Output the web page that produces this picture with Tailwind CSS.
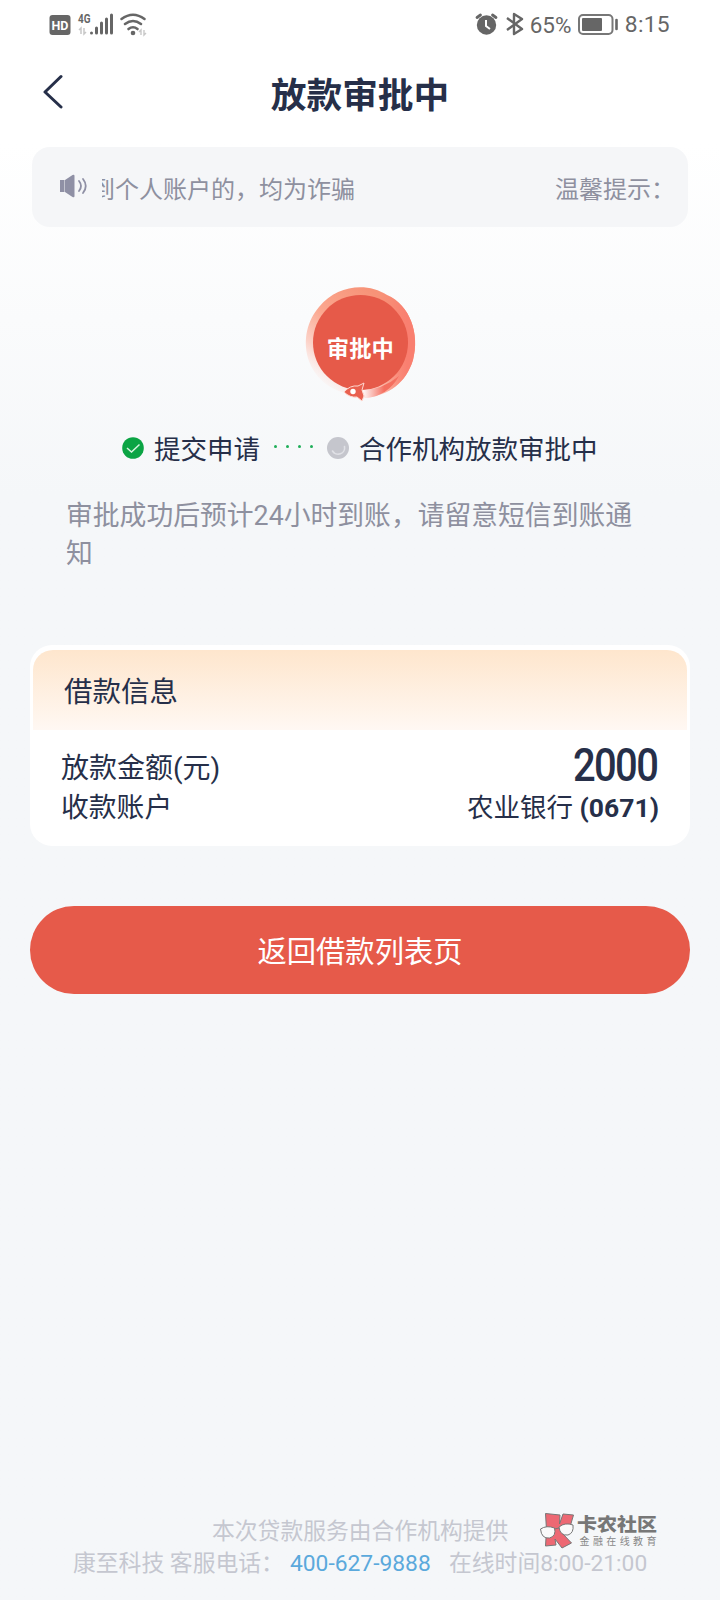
<!DOCTYPE html>
<html lang="zh-CN">
<head>
<meta charset="utf-8">
<title>放款审批中</title>
<script src="https://cdn.jsdelivr.net/npm/@tailwindcss/browser@4"></script>
</head>
<body class="bg-[#f5f7f9]">
<div class="relative flex h-[1600px] w-[720px] flex-col overflow-hidden bg-linear-to-b from-white from-[9%] via-[#f5f7f9] via-[31%] to-[#f5f7f9] font-['Roboto','Noto_Sans_CJK_SC',sans-serif] text-[#262f49]">

  <!-- Status bar -->
  <div class="flex h-12 shrink-0 items-center justify-between pl-[49px] pr-[50px] text-[#666]">
    <svg class="h-12 w-[100px]" viewBox="49 0 100 48" fill="none">
      <rect x="49.500" y="15" width="21" height="20" rx="3" fill="#666"/>
      <text x="51.500" y="30" font-family="Roboto" font-size="13" font-weight="700" fill="#fff" textLength="17" lengthAdjust="spacingAndGlyphs">HD</text>
      <text x="78" y="23" font-family="Roboto" font-size="13" font-weight="700" fill="#666" textLength="12.500" lengthAdjust="spacingAndGlyphs">4G</text>
      <path d="M81 34v-6l-2 2M84 28v6l2-2" stroke="#c8c8c8" stroke-width="1.500"/>
      <path d="M91.500 33v0M96.500 33v-5M101.500 33v-10M106.500 33v-14M111.500 33V15" stroke="#666" stroke-width="3" stroke-linecap="round"/>
      <path d="M121.500 19q11.500-8.500 23 0M125 24q8-6 16 0M128.500 29q4.500-3.500 9 0" stroke="#666" stroke-width="2.600" stroke-linecap="round"/>
      <circle cx="133" cy="33" r="2.300" fill="#666"/>
      <path d="M141 35v-5l-2 2M144 30v5l2-2" stroke="#c8c8c8" stroke-width="1.400"/>
    </svg>
    <div class="flex items-center">
      <svg class="h-12 w-[52px]" viewBox="474 0 52 48" fill="none">
        <circle cx="486.500" cy="25" r="9.700" fill="#666"/>
        <path d="M477 17.500l3.500-2.500M496 17.500l-3.500-2.500" stroke="#666" stroke-width="2.800" stroke-linecap="round"/>
        <path d="M486 20v6l4 3" stroke="#fff" stroke-width="2"/>
        <path d="M507 18l15 11-8 5V14l8 5-15 11" stroke="#666" stroke-width="2.400" stroke-linejoin="round"/>
      </svg>
      <span class="ml-1 w-[44px] pt-[2px] text-[22.5px] leading-none whitespace-nowrap tracking-[-0.1px]">65%</span>
      <svg class="ml-[2px] h-12 w-[42px]" viewBox="576 0 42 48" fill="none">
        <rect x="579" y="15" width="33.500" height="19" rx="4" stroke="#777" stroke-width="2"/>
        <rect x="582" y="18" width="20" height="13" rx="1" fill="#666"/>
        <path d="M616.500 20v9" stroke="#666" stroke-width="2.600" stroke-linecap="round"/>
      </svg>
      <span class="ml-[7px] pt-[2px] text-[22.8px] leading-none tracking-[0.3px]">8:15</span>
    </div>
  </div>

  <!-- Title bar -->
  <header class="flex h-[99px] shrink-0 items-start pl-10">
    <svg class="mt-[25px] h-9 w-6" viewBox="0 0 24 36" fill="none" stroke="#262f49" stroke-width="3" stroke-linecap="round" stroke-linejoin="round"><path d="M21 3.500 5 19 21 34"/></svg>
    <h1 class="flex h-[97px] flex-1 items-center justify-center pr-16 text-[35.700px] leading-none font-bold">放款审批中</h1>
  </header>

  <!-- Scrolling notice -->
  <div class="mx-8 flex h-[80px] shrink-0 items-center rounded-[18px] bg-[#f5f6f8] pl-[27px] text-[24px] text-[#8e909f]">
    <svg class="-mt-1 h-7 w-8" viewBox="0 0 32 28" fill="none"><path d="M1 9h4.500v12H1zM6 9l7.500-5q2-1 2 1v20q0 2-2 1l-7.500-5z" fill="#8f90a5"/><path d="M20 10q4 5 0 10M24 8q5.500 7 0 14" stroke="#8f90a5" stroke-width="1.800" stroke-linecap="round"/></svg>
    <div class="mt-[5px] ml-[11px] flex w-[574px] overflow-hidden leading-8 whitespace-nowrap">
      <span class="-ml-[11px]">到个人账户的，均为诈骗</span>
      <span class="ml-[200px]">温馨提示：</span>
    </div>
  </div>

  <!-- Progress badge -->
  <div class="mt-[53px] flex h-[132px] shrink-0 justify-center">
    <svg class="h-[130px] w-[130px]" viewBox="295 280 130 130">
      <defs>
        <linearGradient id="ring" x1="0.150" y1="0.900" x2="0.750" y2="0.150"><stop offset="0" stop-color="#fde3dd" stop-opacity="0"/><stop offset=".25" stop-color="#fcd2c8"/><stop offset=".55" stop-color="#fba78f"/><stop offset="1" stop-color="#f79378"/></linearGradient>
        <linearGradient id="side" x1="0" y1="0" x2="1" y2="0"><stop offset="0.350" stop-color="#f97f70" stop-opacity="0"/><stop offset="0.850" stop-color="#f97f70"/></linearGradient>
        <linearGradient id="tail" x1="0" y1="0" x2="1" y2="0"><stop offset="0" stop-color="#fff"/><stop offset="0.600" stop-color="#f46f60"/></linearGradient>
      </defs>
      <path d="M345 393C304 382 295 335 319 307C337 285 367 282 387 295C410 305 420 334 413 360C406 383 389 395 366 398Z" fill="url(#ring)"/>
      <path d="M360 287C370 286 380 290 387 295C410 305 420 334 413 360C406 383 389 395 366 398L360 390Z" fill="url(#side)"/>
      <circle cx="360.500" cy="342.500" r="47.500" fill="#e65a49"/>
      <path d="M362 390Q382 390 399 376Q388 396 366 398Z" fill="url(#tail)"/>
      <path d="M344 392Q350 385 358 386L364 383 362 390 364 396 362 401 357 397Q350 398 344 392Z" fill="#e9604f" stroke="#ffd8d0" stroke-width="1"/>
      <circle cx="353" cy="391.500" r="2.700" fill="#fff"/>
      <text x="360.300" y="356.500" text-anchor="middle" font-family="Noto Sans CJK SC" font-size="22.300" font-weight="700" fill="#fff">审批中</text>
    </svg>
  </div>

  <!-- Steps -->
  <div class="flex h-[72px] shrink-0 items-center pl-[122px] text-[26.500px] leading-none whitespace-nowrap">
    <svg class="h-[22px] w-[22px]" viewBox="0 0 22 22" fill="none"><circle cx="11" cy="11" r="10.800" fill="#0ba444"/><path d="M5 11l4.500 4 8-7.500" stroke="#d8f4df" stroke-width="1.500"/></svg>
    <span class="ml-[10px] w-[106px] pt-1">提交申请</span>
    <div class="mb-[3px] ml-[14px] flex w-[39px] justify-between"><i class="size-[3px] rounded-full bg-[#1fae59]"></i><i class="size-[3px] rounded-full bg-[#1fae59]"></i><i class="size-[3px] rounded-full bg-[#1fae59]"></i><i class="size-[3px] rounded-full bg-[#1fae59]"></i></div>
    <svg class="ml-[14px] h-[22px] w-[22px]" viewBox="0 0 22 22" fill="none"><circle cx="11" cy="11" r="11" fill="#c5c6cd"/><path d="M17.500 9.500a6.500 6.500 0 0 1-12 4.500" stroke="#e0e1e6" stroke-width="1.600" stroke-linecap="round"/></svg>
    <span class="ml-[10px] pt-1">合作机构放款审批中</span>
  </div>
  <p class="ml-[66px] h-[150px] w-[590px] shrink-0 pt-[13px] text-[26.800px] leading-[38px] text-[#8e909f]">审批成功后预计24小时到账，请留意短信到账通<br>知</p>

  <!-- Loan details -->
  <section class="mx-[30px] mt-[11px] h-[201px] shrink-0 rounded-[22px] bg-white p-[3px] pt-[5px]">
    <h2 class="flex h-20 items-center rounded-t-[20px] bg-linear-to-b from-[#fee6cd] to-[#fff8f3] pt-[6px] pl-[31px] text-[28.500px] leading-none">借款信息</h2>
    <div class="flex h-[58px] items-center justify-between pt-[14px] pr-[28px] pl-[28px]">
      <span class="pt-[5px] text-[28px] leading-none">放款金额(元)</span>
      <span class="-mt-1 mr-[2px] origin-right scale-x-[0.85] text-[47px] leading-none font-medium tracking-[-1.9px]">2000</span>
    </div>
    <div class="flex h-9 items-center justify-between pt-1 pr-[28px] pl-[28px] leading-none">
      <span class="text-[27.800px]">收款账户</span>
      <span class="text-[26.500px]">农业银行 <b>(0671)</b></span>
    </div>
  </section>

  <button class="mx-[30px] mt-[60px] flex h-[88px] shrink-0 items-center justify-center rounded-full bg-[#e65a4a] pt-[5px] text-[29.300px] leading-none text-white">返回借款列表页</button>

  <!-- Footer -->
  <footer class="mt-auto h-[84px] text-[22.800px] leading-8 whitespace-nowrap text-[#c5c7d0]">
    <p class="pl-[212px]">本次贷款服务由合作机构提供</p>
    <p class="flex pl-[73px]"><span class="w-[217px]">康至科技 客服电话：</span><span class="w-[159px] text-[#5ba9dc]">400-627-9888</span><span>在线时间8:00-21:00</span></p>
  </footer>

  <!-- Community watermark -->
  <svg class="absolute top-[1508px] left-[536px] h-[44px] w-[126px]" viewBox="536 1508 126 44">
    <path d="M545.500 1513.500L560 1515L559.500 1524L563 1514L573.500 1515L570 1527L563 1534L571.500 1543L562 1548L555 1539L556 1545L545.500 1546L546.500 1530Z" fill="#ed6873" stroke="#777" stroke-width="1" stroke-linejoin="round"/>
    <path d="M540.500 1529q6-4 14-1 2 8-5 10-8 1-9-9zM559 1527q6-5 14-2 1 8-5 10-8 1-9-8zM554.500 1529l4.500-1" fill="#fafafa" stroke="#777" stroke-width="1"/>
    <text x="577" y="1530.500" font-family="Noto Sans CJK SC" font-size="18.500" font-weight="900" fill="#777" textLength="80" lengthAdjust="spacingAndGlyphs">卡农社区</text>
    <text x="579.500" y="1544.500" font-family="Noto Sans CJK SC" font-size="10" fill="#888" textLength="77">金融在线教育</text>
  </svg>
</div>
</body>
</html>
